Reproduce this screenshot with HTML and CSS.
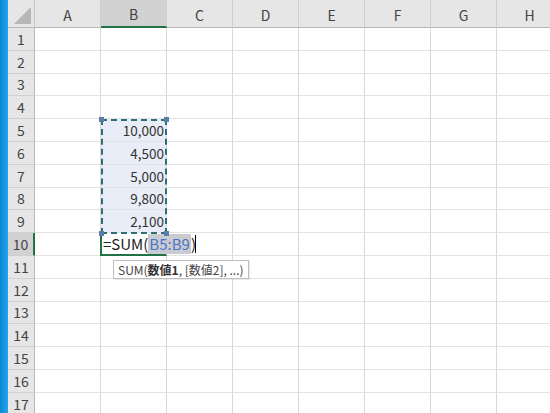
FILE: index.html
```html
<!DOCTYPE html>
<html>
<head>
<meta charset="utf-8">
<link rel="stylesheet" href="styles.css">
</head>
<body>
<div class="app">
  <div class="bluebar"></div>
  <div class="sheet">
    <div class="corner"><span class="tri"></span></div>
    <div class="ch">A</div><div class="ch sel">B</div><div class="ch">C</div><div class="ch">D</div><div class="ch">E</div><div class="ch">F</div><div class="ch">G</div><div class="ch">H</div>

    <div class="rh">1</div><div class="c"></div><div class="c"></div><div class="c"></div><div class="c"></div><div class="c"></div><div class="c"></div><div class="c"></div><div class="c"></div>
    <div class="rh">2</div><div class="c"></div><div class="c"></div><div class="c"></div><div class="c"></div><div class="c"></div><div class="c"></div><div class="c"></div><div class="c"></div>
    <div class="rh">3</div><div class="c"></div><div class="c"></div><div class="c"></div><div class="c"></div><div class="c"></div><div class="c"></div><div class="c"></div><div class="c"></div>
    <div class="rh">4</div><div class="c"></div><div class="c"></div><div class="c"></div><div class="c"></div><div class="c"></div><div class="c"></div><div class="c"></div><div class="c"></div>
    <div class="rh">5</div><div class="c"></div><div class="c num rng">10,000</div><div class="c"></div><div class="c"></div><div class="c"></div><div class="c"></div><div class="c"></div><div class="c"></div>
    <div class="rh">6</div><div class="c"></div><div class="c num rng">4,500</div><div class="c"></div><div class="c"></div><div class="c"></div><div class="c"></div><div class="c"></div><div class="c"></div>
    <div class="rh">7</div><div class="c"></div><div class="c num rng">5,000</div><div class="c"></div><div class="c"></div><div class="c"></div><div class="c"></div><div class="c"></div><div class="c"></div>
    <div class="rh">8</div><div class="c"></div><div class="c num rng">9,800</div><div class="c"></div><div class="c"></div><div class="c"></div><div class="c"></div><div class="c"></div><div class="c"></div>
    <div class="rh">9</div><div class="c"></div><div class="c num rng">2,100</div><div class="c"></div><div class="c"></div><div class="c"></div><div class="c"></div><div class="c"></div><div class="c"></div>
    <div class="rh sel">10</div><div class="c"></div><div class="c active"><span class="formula">=SUM(<span class="ref">B5:B9</span>)<span class="caret"></span></span></div><div class="c nol"></div><div class="c"></div><div class="c"></div><div class="c"></div><div class="c"></div><div class="c"></div>
    <div class="rh">11</div><div class="c"></div><div class="c"></div><div class="c"></div><div class="c"></div><div class="c"></div><div class="c"></div><div class="c"></div><div class="c"></div>
    <div class="rh">12</div><div class="c"></div><div class="c"></div><div class="c"></div><div class="c"></div><div class="c"></div><div class="c"></div><div class="c"></div><div class="c"></div>
    <div class="rh">13</div><div class="c"></div><div class="c"></div><div class="c"></div><div class="c"></div><div class="c"></div><div class="c"></div><div class="c"></div><div class="c"></div>
    <div class="rh">14</div><div class="c"></div><div class="c"></div><div class="c"></div><div class="c"></div><div class="c"></div><div class="c"></div><div class="c"></div><div class="c"></div>
    <div class="rh">15</div><div class="c"></div><div class="c"></div><div class="c"></div><div class="c"></div><div class="c"></div><div class="c"></div><div class="c"></div><div class="c"></div>
    <div class="rh">16</div><div class="c"></div><div class="c"></div><div class="c"></div><div class="c"></div><div class="c"></div><div class="c"></div><div class="c"></div><div class="c"></div>
    <div class="rh">17</div><div class="c"></div><div class="c"></div><div class="c"></div><div class="c"></div><div class="c"></div><div class="c"></div><div class="c"></div><div class="c"></div>

    <div class="marquee">
      <span class="h tl"></span><span class="h tr"></span><span class="h bl"></span><span class="h br"></span>
    </div>
    <div class="tip">SUM(<b>数値1</b>, [数値2], ...)</div>
  </div>
</div>
</body>
</html>
```

FILE: styles.css
```css
html, body {
  margin: 0;
  padding: 0;
  background: #ffffff;
  overflow: hidden;
}
body {
  width: 550px;
  height: 413px;
  font-family: "Noto Sans CJK JP", "Noto Sans", sans-serif;
  color: #333;
}
.app {
  display: flex;
  height: 413px;
}
.bluebar {
  width: 8px;
  flex: none;
  background: linear-gradient(to right, #0e86d4, #22a6ec);
}
.sheet {
  position: relative;
  display: grid;
  grid-template-columns: 27px repeat(8, 66px);
  grid-template-rows: 28px repeat(17, 22.8px);
  flex: none;
}
.corner {
  position: relative;
  background: #e6e6e6;
  border-right: 1px solid #c8c8c8;
  border-bottom: 1px solid #b8b8b8;
  box-sizing: border-box;
}
.tri {
  position: absolute;
  right: 3px;
  bottom: 3px;
  width: 0;
  height: 0;
  border-left: 17px solid transparent;
  border-bottom: 17px solid #b6b6b6;
}
.ch {
  background: #e6e6e6;
  border-right: 1px solid #cfcfcf;
  border-bottom: 1px solid #b4b4b4;
  box-sizing: border-box;
  display: flex;
  align-items: center;
  justify-content: center;
  font-size: 14px;
  color: #444;
  padding-top: 2px;
}
.ch.sel {
  background: #d2d2d2;
  border-bottom: 2px solid #217346;
  color: #444;
}
.rh {
  background: #e6e6e6;
  border-right: 1px solid #b8b8b8;
  border-bottom: 1px solid #d0d0d0;
  box-sizing: border-box;
  display: flex;
  align-items: center;
  justify-content: center;
  font-size: 14px;
  color: #444;
}
.rh.sel {
  background: #d2d2d2;
  border-right: 2px solid #217346;
}
.c {
  border-right: 1px solid #d8d8d8;
  border-bottom: 1.5px solid #e2e2e2;
  box-sizing: border-box;
  font-size: 13.5px;
  color: #333;
}
.num {
  display: flex;
  align-items: center;
  justify-content: flex-end;
  padding-right: 2px;
}
.rng {
  background: #e8edf7;
}
.active {
  position: relative;
  border-left: 2px solid #217346;
  border-bottom: 2px solid #217346;
  margin-left: -1px;
  overflow: visible;
  z-index: 2;
}
.formula {
  position: absolute;
  left: 1px;
  top: 1px;
  white-space: nowrap;
  font-size: 15px;
  color: #222;
  line-height: 20px;
  display: flex;
  align-items: center;
}
.ref {
  color: #4a74c9;
  background: #c9cbd0;
  padding: 0 1px;
}
.caret {
  display: inline-block;
  width: 1px;
  height: 18px;
  background: #000;
  margin-left: -1px;
}
.nol {
  border-left: none;
}
.marquee {
  position: absolute;
  left: 93px;
  top: 119px;
  width: 66px;
  height: 115px;
  box-sizing: border-box;
  border: 2px dashed #2f6e72;
  z-index: 3;
}
.h {
  position: absolute;
  width: 5px;
  height: 5px;
  background: #5a7ca6;
}
.tl { left: -4px; top: -4px; }
.tr { right: -4px; top: -4px; }
.bl { left: -4px; bottom: -4px; }
.br { right: -4px; bottom: -4px; }
.tip {
  position: absolute;
  left: 105px;
  top: 260px;
  height: 19px;
  padding: 0 4px;
  box-sizing: border-box;
  background: #fff;
  border: 1px solid #bdbdbd;
  font-size: 12px;
  line-height: 17px;
  color: #444;
  white-space: nowrap;
  z-index: 4;
  box-shadow: 1px 1px 1px rgba(0,0,0,0.08);
}
.tip b {
  font-weight: bold;
  color: #333;
}
```
